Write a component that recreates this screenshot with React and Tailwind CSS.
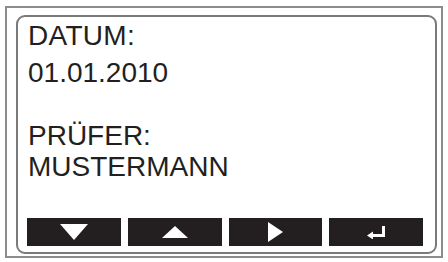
import React from 'react';

const Key = ({ children }) => (
  <div className="h-[28px] bg-[#231f20] flex items-center justify-center">
    {children}
  </div>
);

export default function App() {
  return (
    <div className="w-[448px] h-[262px] bg-white pt-[6px] pl-[5px] pr-[5px] pb-[4px] font-['Liberation_Sans',Arial,sans-serif]">
      <div className="h-full border-2 border-[#8c8c8c] pt-[7px] pl-[9px] pr-[4px] pb-[2px]">
        <div className="h-full border-2 border-[#7a7a7a] rounded-[9px] flex flex-col pt-[3px] pl-[10px] pr-[12px] pb-[6px] text-[#231f20]">
          <div className="text-[28px] leading-[32px] tracking-[0.3px]">DATUM:</div>
          <div className="text-[28px] leading-[32px] mt-[5px]">01.01.2010</div>
          <div className="text-[28px] leading-[32px] mt-[31px]">PRÜFER:</div>
          <div className="text-[28px] leading-[32px] -mt-[1px]">MUSTERMANN</div>

          <div className="mt-auto -ml-[1px] grid grid-cols-4 gap-[7px]">
            <Key>
              <svg width="28" height="16" viewBox="0 0 28 16">
                <polygon points="0,0 28,0 14,16" fill="#fff" />
              </svg>
            </Key>
            <Key>
              <svg width="26" height="12" viewBox="0 0 26 12">
                <polygon points="13,0 26,12 0,12" fill="#fff" />
              </svg>
            </Key>
            <Key>
              <svg width="15" height="20" viewBox="0 0 15 20">
                <polygon points="0,0 15,10 0,20" fill="#fff" />
              </svg>
            </Key>
            <Key>
              <svg width="19" height="13" viewBox="0 0 19 13">
                <path d="M16.5 0 V9.5 H5" stroke="#fff" strokeWidth="3" fill="none" />
                <polygon points="0,9.5 6,5.5 6,13.5" fill="#fff" />
              </svg>
            </Key>
          </div>
        </div>
      </div>
    </div>
  );
}
